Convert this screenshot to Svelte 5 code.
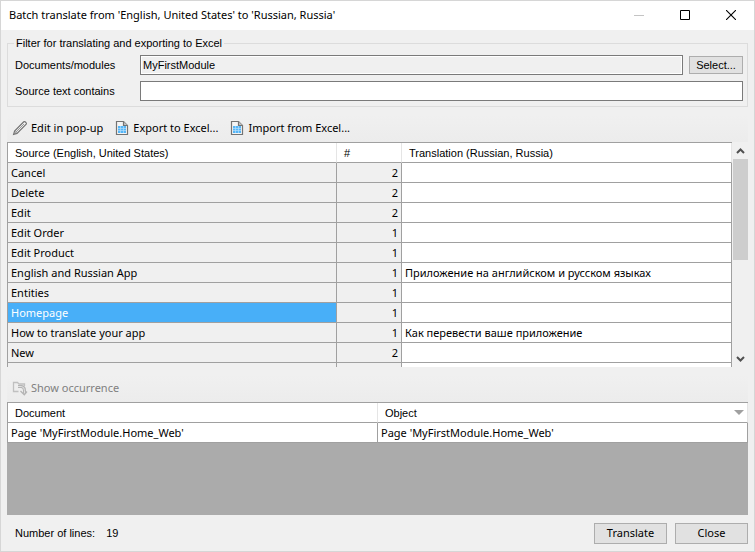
<script>
  const rows = [
    { source: 'Cancel', count: 2, translation: '' },
    { source: 'Delete', count: 2, translation: '' },
    { source: 'Edit', count: 2, translation: '' },
    { source: 'Edit Order', count: 1, translation: '' },
    { source: 'Edit Product', count: 1, translation: '' },
    { source: 'English and Russian App', count: 1, translation: 'Приложение на английском и русском языках' },
    { source: 'Entities', count: 1, translation: '' },
    { source: 'Homepage', count: 1, translation: '' },
    { source: 'How to translate your app', count: 1, translation: 'Как перевести ваше приложение' },
    { source: 'New', count: 2, translation: '' },
    { source: '', count: '', translation: '' }
  ];
  const occurrences = [
    { document: "Page 'MyFirstModule.Home_Web'", object: "Page 'MyFirstModule.Home_Web'" }
  ];
  let selected = $state('Homepage');
  let modules = $state('MyFirstModule');
  let filter = $state('');
</script>

{#snippet sheet()}
  <svg width="16" height="16" viewBox="0 0 16 16" aria-hidden="true">
    <path d="M2.500 1.500h7l4 4v9h-11z" fill="#f4f4f4" stroke="#737373" stroke-width="1.200" />
    <path d="M9.500 1.500v4h4" fill="#c4c4c4" stroke="#737373" stroke-width="1.200" />
    <path d="M4 6h8v7H4z" fill="#55b6f8" />
    <path d="M4 8.500h8M4 10.500h8M6.500 6v7M9.500 6v7" stroke="#b4defb" stroke-width=".7" />
  </svg>
{/snippet}

<div class="window">
  <header>
    <h1>Batch translate from 'English, United States' to 'Russian, Russia'</h1>
    <div class="controls">
      <button aria-label="Minimize" disabled>
        <svg width="10" height="10" viewBox="0 0 10 10"><path d="M0 5.5h10" stroke="#c4c4c4" /></svg>
      </button>
      <button aria-label="Maximize">
        <svg width="10" height="10" viewBox="0 0 10 10"><path d="M.5.5h9v9h-9z" fill="none" stroke="#000" /></svg>
      </button>
      <button aria-label="Close window">
        <svg width="10" height="10" viewBox="0 0 10 10"><path d="M0 0l10 10M10 0L0 10" stroke="#000" stroke-width="1.1" /></svg>
      </button>
    </div>
  </header>

  <main>
    <fieldset>
      <legend>Filter for translating and exporting to Excel</legend>
      <div class="field">
        <label for="modules">Documents/modules</label>
        <input id="modules" class="readonly" readonly value={modules} />
        <button class="push small">Select...</button>
      </div>
      <div class="field">
        <label for="filter">Source text contains</label>
        <input id="filter" bind:value={filter} />
      </div>
    </fieldset>

    <div class="toolbar">
      <button>
        <svg width="16" height="16" viewBox="0 0 16 16" aria-hidden="true">
          <path d="M1.600 14.400l1-3.400L11.800 1.800q.8-.6 1.600.2l.6.6q.8.8.2 1.600L5 13.400z" fill="#f4f4f4" stroke="#737373" stroke-width="1.200" />
          <path d="M3.400 12.600L12 4M2.600 11l2.400 2.400" fill="none" stroke="#858585" stroke-width=".8" />
        </svg>
        Edit in pop-up
      </button>
      <button>{@render sheet()}Export to Excel...</button>
      <button>{@render sheet()}Import from Excel...</button>
    </div>

    <div class="grid sources">
      <div class="clip">
        <table>
          <colgroup><col class="source" /><col class="count" /><col /></colgroup>
          <thead>
            <tr><th>Source (English, United States)</th><th>#</th><th>Translation (Russian, Russia)</th></tr>
          </thead>
          <tbody>
            {#each rows as row}
              <tr onclick={() => (selected = row.source)}>
                <td class="fixed" class:selected={row.source === selected}>{row.source}</td>
                <td class="fixed number">{row.count}</td>
                <td>{row.translation}</td>
              </tr>
            {/each}
          </tbody>
        </table>
      </div>
      <div class="scrollbar">
        <button aria-label="Scroll up">
          <svg width="9" height="6" viewBox="0 0 9 6"><path d="M1 5l3.500-3.500L8 5" fill="none" stroke="#505050" stroke-width="2" /></svg>
        </button>
        <div class="track"><div class="thumb"></div></div>
        <button aria-label="Scroll down">
          <svg width="9" height="6" viewBox="0 0 9 6"><path d="M1 1l3.500 3.500L8 1" fill="none" stroke="#505050" stroke-width="2" /></svg>
        </button>
      </div>
    </div>

    <div class="toolbar lower">
      <button disabled>
        <svg width="16" height="16" viewBox="0 0 16 16" aria-hidden="true">
          <path d="M6.500 11.500h-5v-9h4l1.500 1.500h5.500v2" fill="none" stroke="#c0c0c0" stroke-width="1.300" />
          <path d="M6 6.500h3.500q3 .5 3 4v3" fill="none" stroke="#b4b4b4" stroke-width="3" />
          <path d="M6 6.500h3.500q3 .5 3 4v3" fill="none" stroke="#ededed" stroke-width=".8" />
          <path d="M8.500 11l3.800 3.700L15 11.500" fill="none" stroke="#b4b4b4" stroke-width="1.300" />
        </svg>
        Show occurrence
      </button>
    </div>

    <div class="grid occurrences">
      <div class="clip">
        <table>
          <colgroup><col class="half" /><col /></colgroup>
          <thead>
            <tr>
              <th>Document</th>
              <th>
                <div class="sorted">
                  Object
                  <svg width="10" height="5" viewBox="0 0 10 5" aria-hidden="true"><path d="M0 0h10L5 5z" fill="#a0a0a0" /></svg>
                </div>
              </th>
            </tr>
          </thead>
          <tbody>
            {#each occurrences as item}
              <tr><td>{item.document}</td><td>{item.object}</td></tr>
            {/each}
          </tbody>
        </table>
      </div>
    </div>
  </main>

  <footer>
    <p>Number of lines: <span>19</span></p>
    <button class="push">Translate</button>
    <button class="push">Close</button>
  </footer>
</div>

<style>
  :global(body) {
    margin: 0;
  }
  .window {
    box-sizing: border-box;
    display: flex;
    flex-direction: column;
    height: 100vh;
    border: 1px solid #d6d6d6;
    background: #f0f0f0;
    color: #000;
    font: 11px/16px "Liberation Sans", Arial, sans-serif;
  }
  button,
  input {
    margin: 0;
    padding: 0;
    font: inherit;
    color: inherit;
  }
  header {
    display: flex;
    align-items: stretch;
    justify-content: space-between;
    height: 29px;
    background: #fff;
  }
  h1 {
    margin: 0;
    padding-left: 8px;
    font: 11px/28px "Noto Sans", "Open Sans", sans-serif;
    white-space: nowrap;
  }
  .controls {
    display: flex;
  }
  .controls button {
    display: flex;
    align-items: center;
    justify-content: center;
    width: 46px;
    padding-bottom: 2px;
    border: 0;
    background: none;
  }
  main {
    display: flex;
    flex: 1;
    flex-direction: column;
    min-height: 0;
    padding: 6px 6px 0;
  }
  fieldset {
    display: flex;
    flex-direction: column;
    gap: 6px;
    min-width: 0;
    margin: 0 0 8px;
    padding: 5px 4px 5px 7px;
    border: 1px solid #dcdcdc;
  }
  legend {
    margin-left: -1px;
    padding: 0 2px;
    line-height: 14px;
  }
  .field {
    display: flex;
    align-items: center;
    gap: 6px;
  }
  .field label {
    width: 119px;
  }
  .field input {
    box-sizing: border-box;
    flex: 1;
    min-width: 0;
    height: 20px;
    padding: 0 2px;
    border: 1px solid #7a7a7a;
    background: #fff;
  }
  .field .readonly {
    background: #f0f0f0;
    box-shadow: inset 0 0 0 1px #fff;
  }
  .push {
    box-sizing: border-box;
    width: 73px;
    height: 21px;
    border: 1px solid #adadad;
    background: #e1e1e1;
    font: 11px/16px "Noto Sans", "Open Sans", sans-serif;
  }
  .push.small {
    width: 54px;
    height: 18px;
    font: 11px/16px "Liberation Sans", Arial, sans-serif;
  }
  .toolbar {
    box-sizing: border-box;
    display: flex;
    flex: none;
    gap: 11px;
    height: 27px;
    padding: 0 0 2px 5px;
    background: linear-gradient(#f0f0f0, #ececec);
  }
  .toolbar.lower {
    margin-top: 8px;
  }
  .toolbar button {
    display: flex;
    align-items: center;
    gap: 3px;
    border: 0;
    background: none;
    font: 11px/16px "Noto Sans", "Open Sans", sans-serif;
    white-space: nowrap;
  }
  .toolbar button:disabled {
    color: #808080;
  }
  .grid {
    display: flex;
    gap: 1px;
    min-height: 0;
  }
  .sources {
    flex: 1 1 225px;
  }
  .occurrences {
    flex: 1 1 113px;
    background: #ababab;
  }
  .clip {
    flex: 1;
    overflow: hidden;
  }
  table {
    width: 100%;
    table-layout: fixed;
    border-collapse: separate;
    border-spacing: 0;
    border-top: 1px solid #a0a0a0;
    border-left: 1px solid #a0a0a0;
  }
  .source {
    width: 329px;
  }
  .count {
    width: 65px;
  }
  .half {
    width: 50%;
  }
  th,
  td {
    box-sizing: border-box;
    height: 20px;
    border-right: 1px solid #a0a0a0;
    border-bottom: 1px solid #a0a0a0;
    background: #fff;
    text-align: left;
    white-space: nowrap;
  }
  th {
    padding: 0 7px;
    border-right-color: #e5e5e5;
    font-weight: normal;
  }
  td {
    padding: 0 3px;
    font: 11px/16px "Noto Sans", "Open Sans", sans-serif;
  }
  .fixed {
    background: #f0f0f0;
  }
  .number {
    text-align: right;
  }
  .selected {
    background: #48aff8;
    color: #fff;
  }
  .sorted {
    display: flex;
    align-items: center;
    justify-content: space-between;
    margin-right: -4px;
  }
  .scrollbar {
    display: flex;
    flex-direction: column;
    width: 15px;
  }
  .scrollbar button {
    display: flex;
    align-items: center;
    justify-content: center;
    height: 17px;
    border: 0;
    background: none;
  }
  .track {
    flex: 1;
  }
  .thumb {
    height: 53%;
    background: #cdcdcd;
  }
  footer {
    display: flex;
    align-items: center;
    gap: 8px;
    height: 36px;
    padding: 0 6px 0 14px;
  }
  footer p {
    flex: 1;
    margin: 0;
  }
  footer span {
    margin-left: 8px;
  }
</style>
